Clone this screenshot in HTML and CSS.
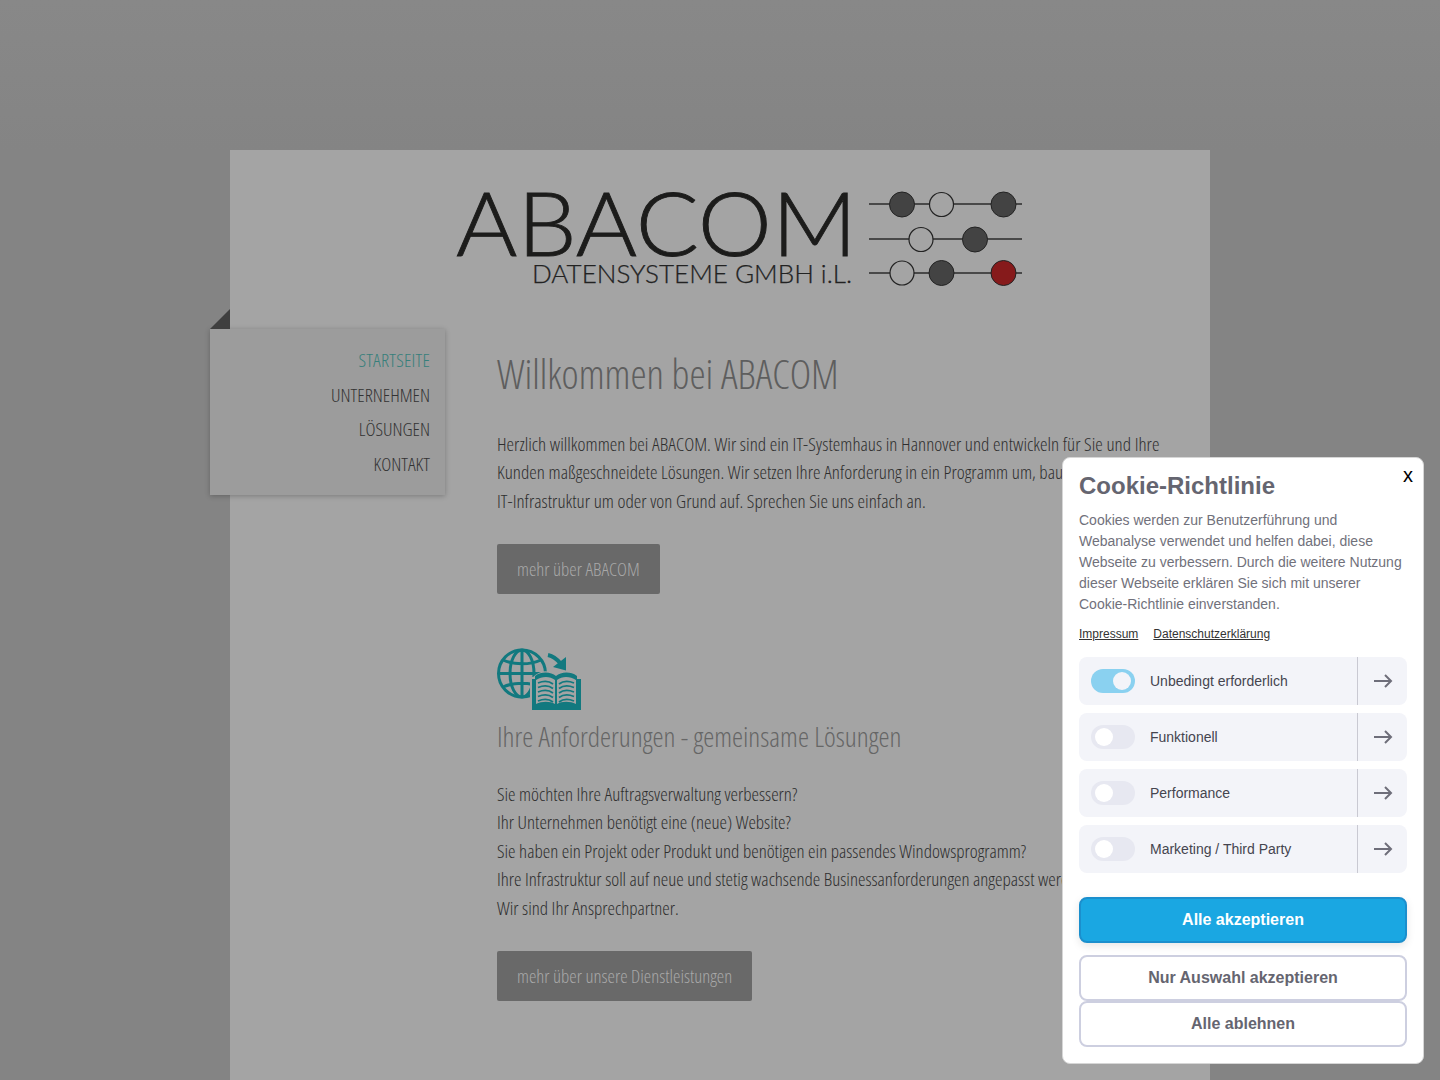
FILE: index.html
```html
<!DOCTYPE html>
<html lang="de">
<head>
<meta charset="utf-8">
<title>ABACOM</title>
<link rel="stylesheet" href="styles.css">
</head>
<body>
<div class="page">
  <header class="logo-row">
    <svg class="logo" width="566" height="100" viewBox="0 0 566 100">
      <text class="logo-big" x="-1" y="66" textLength="401" lengthAdjust="spacingAndGlyphs">ABACOM</text>
      <text class="logo-small" x="75" y="93" textLength="320" lengthAdjust="spacingAndGlyphs">DATENSYSTEME GMBH i.L.</text>
      <g class="wire">
        <line x1="412" y1="14" x2="565" y2="14"/><line x1="412" y1="49" x2="565" y2="49"/><line x1="412" y1="83" x2="565" y2="83"/>
      </g>
      <g class="bead-dark"><circle cx="445" cy="14.500" r="12.500"/><circle cx="546.500" cy="14.500" r="12.500"/><circle cx="518" cy="49.500" r="12.500"/><circle cx="484.500" cy="83" r="12.500"/></g>
      <g class="bead-light"><circle cx="484.500" cy="14.500" r="12"/><circle cx="464" cy="49.500" r="12"/><circle cx="445" cy="83" r="12"/></g>
      <circle class="bead-red" cx="546.500" cy="83" r="12.500"/>
    </svg>
  </header>
  <div class="body-row">
    <nav class="menu">
      <span class="fold"></span>
      <a class="active">STARTSEITE</a>
      <a>UNTERNEHMEN</a>
      <a>LÖSUNGEN</a>
      <a>KONTAKT</a>
    </nav>
    <main class="content">
      <h1>Willkommen bei ABACOM</h1>
      <p class="lead-one">Herzlich willkommen bei ABACOM. Wir sind ein IT-Systemhaus in Hannover und entwickeln für Sie und Ihre<br>Kunden maßgeschneidete Lösungen. Wir setzen Ihre Anforderung in ein Programm um, bauen Ihre<br>IT-Infrastruktur um oder von Grund auf. Sprechen Sie uns einfach an.</p>
      <a class="btn">mehr über ABACOM</a>
      <svg class="feature-icon" width="86" height="64" viewBox="0 0 86 64">
        <g class="globe">
          <circle cx="25" cy="25.500" r="23.500"/>
          <ellipse cx="25" cy="25.500" rx="12" ry="23.500"/>
          <path d="M6 12c11 5 27 5 38 0M6 39c11-5 27-5 38 0M2 25.500h46M25 2v47"/>
        </g>
        <path class="arrow-shaft" d="M51 7c5 1 9 4 13 9"/>
        <path class="arrow-fill" d="M69 9v13.500l-13-3.500z"/>
        <path class="book-halo" d="M33 62V29h3c8-8 17-7 24-1 7-6 16-7 25 1v33z"/>
        <path class="book-fill" d="M35 62V31h3v-3c7-5 16-4 21 0 5-4 14-5 21 0v3h4v31z"/>
        <path class="book-pages" d="M39 56V32c6-4 14-4 19 0v24c-5-3-13-3-19 0zM60 32c5-4 13-4 19 0v24c-6-3-14-3-19 0z"/>
        <path class="book-lines" d="M41 35c5-2 11-2 15 1M41 39.500c5-2 11-2 15 1M41 44c5-2 11-2 15 1M41 48.500c5-2 11-2 15 1M41 53c5-2 11-2 15 1M77 35c-5-2-11-2-15 1M77 39.500c-5-2-11-2-15 1M77 44c-5-2-11-2-15 1M77 48.500c-5-2-11-2-15 1M77 53c-5-2-11-2-15 1"/>
      </svg>
      <h2>Ihre Anforderungen - gemeinsame Lösungen</h2>
      <p class="lead-two">Sie möchten Ihre Auftragsverwaltung verbessern?<br>Ihr Unternehmen benötigt eine (neue) Website?<br>Sie haben ein Projekt oder Produkt und benötigen ein passendes Windowsprogramm?<br>Ihre Infrastruktur soll auf neue und stetig wachsende Businessanforderungen angepasst werden?<br>Wir sind Ihr Ansprechpartner.</p>
      <a class="btn btn-last">mehr über unsere Dienstleistungen</a>
    </main>
  </div>
</div>

<aside class="cookie">
  <button class="close">x</button>
  <h3>Cookie-Richtlinie</h3>
  <p>Cookies werden zur Benutzerführung und Webanalyse verwendet und helfen dabei, diese Webseite zu verbessern. Durch die weitere Nutzung dieser Webseite erklären Sie sich mit unserer Cookie-Richtlinie einverstanden.</p>
  <div class="links"><a>Impressum</a><a>Datenschutzerklärung</a></div>
  <div class="opts">
    <div class="opt"><span class="toggle on"></span><span class="label">Unbedingt erforderlich</span><span class="more"><svg width="20" height="14" viewBox="0 0 20 14"><path d="M1 7h17M12 1l6 6-6 6"/></svg></span></div>
    <div class="opt"><span class="toggle"></span><span class="label">Funktionell</span><span class="more"><svg width="20" height="14" viewBox="0 0 20 14"><path d="M1 7h17M12 1l6 6-6 6"/></svg></span></div>
    <div class="opt"><span class="toggle"></span><span class="label">Performance</span><span class="more"><svg width="20" height="14" viewBox="0 0 20 14"><path d="M1 7h17M12 1l6 6-6 6"/></svg></span></div>
    <div class="opt"><span class="toggle"></span><span class="label">Marketing / Third Party</span><span class="more"><svg width="20" height="14" viewBox="0 0 20 14"><path d="M1 7h17M12 1l6 6-6 6"/></svg></span></div>
  </div>
  <button class="cbtn primary">Alle akzeptieren</button>
  <button class="cbtn second">Nur Auswahl akzeptieren</button>
  <button class="cbtn third">Alle ablehnen</button>
</aside>
</body>
</html>
```
FILE: styles.css
```css
* { box-sizing: border-box; }
html, body { margin: 0; height: 1080px; overflow: hidden; }
body {
  background: linear-gradient(#888888 0, #848484 150px, #848484 100%);
  font-family: "Open Sans", "Liberation Sans", sans-serif;
}
.page {
  width: 980px;
  height: 930px;
  margin: 150px auto 0;
  background: #a4a4a4;
  overflow: visible;
}
.logo-row { height: 179px; padding: 40px 0 0 227px; }
.logo { display: block; overflow: visible; }
.logo-big { font: 300 89px "Lato", sans-serif; fill: #1c1c1b; stroke: #1c1c1b; stroke-width: .9px; }
.logo-small { font: 300 25px "Lato", sans-serif; fill: #222; stroke: #222; stroke-width: .25px; }
.wire line { stroke: #2b2b2b; stroke-width: 1.600; }
.bead-dark circle { fill: #434343; stroke: #222; stroke-width: 1; }
.bead-light circle { fill: #a4a4a4; stroke: #222; stroke-width: 1.200; }
.bead-red { fill: #861a1b; stroke: #222; stroke-width: 1; }
.body-row { display: flex; margin-left: -20px; }
.menu {
  position: relative;
  width: 235px;
  height: 166px;
  background: #9c9c9c;
  box-shadow: 0 1px 5px rgba(0,0,0,.25);
  padding: 14px 15px 0 0;
  display: flex;
  flex-direction: column;
  align-items: flex-end;
  flex: none;
  font-stretch: condensed;
}
.fold {
  position: absolute;
  left: 0;
  top: -20px;
  width: 0;
  height: 0;
  border-left: 20px solid transparent;
  border-bottom: 20px solid #3f3f3f;
}
.menu a {
  font-size: 19px;
  font-weight: 300;
  line-height: 34.500px;
  color: #333;
}
.menu a.active { color: #367f7b; letter-spacing: .2px; }
.content { margin-left: 52px; width: 680px; flex: none; font-stretch: condensed; font-weight: 300; }
h1 { margin: 17px 0 0; font-size: 40.800px; font-weight: 300; line-height: 54px; color: #5e5e5e; white-space: nowrap; }
h2 { margin: 4px 0 0; font-size: 28px; font-weight: 300; line-height: 40px; color: #666; white-space: nowrap; }
.content p { margin: 30px 0 0; font-size: 19px; line-height: 28.500px; color: #2e2e2e; white-space: nowrap; }
.content p.lead-one { margin-top: 29.700px; letter-spacing: .03px; }
.content p.lead-two { margin-top: 24px; font-size: 18.900px; }
.btn {
  display: inline-block;
  margin-top: 28.800px;
  height: 50px;
  padding: 0 20px;
  line-height: 50px;
  font-size: 18.800px;
  border-radius: 2px;
  background: #696969;
  color: #a8a8a8;
}
.btn-last { margin-top: 28.500px; }
.feature-icon { display: block; margin-top: 54px; }
.globe { fill: none; stroke: #12797f; stroke-width: 3; }
.arrow-shaft { fill: none; stroke: #12797f; stroke-width: 4; }
.arrow-fill { fill: #12797f; }
.book-halo { fill: #a4a4a4; }
.book-fill { fill: #12797f; }
.book-pages { fill: #a4a4a4; }
.book-lines { fill: none; stroke: #12797f; stroke-width: 1.800; }

.cookie {
  position: fixed;
  left: 1062px;
  top: 457px;
  width: 362px;
  height: 607px;
  background: #fff;
  border: 1px solid #d6d6d6;
  border-radius: 8px;
  padding: 10px 16px 0;
  font-family: "Liberation Sans", Arial, sans-serif;
  color: #656570;
}
.close {
  position: absolute;
  right: 10px;
  top: 6px;
  padding: 0;
  border: 0;
  background: none;
  font: 20px "Liberation Sans", sans-serif;
  color: #000;
}
.cookie h3 { margin: 0; font-size: 24px; font-weight: 700; line-height: 36px; color: #656570; }
.cookie p { margin: 6px 0 0; font-size: 14px; line-height: 21px; color: #71717b; }
.links { margin-top: 10px; display: flex; gap: 15px; font-size: 12px; line-height: 18px; }
.links a { color: #333; text-decoration: underline; }
.opts { margin-top: 14px; display: flex; flex-direction: column; gap: 8px; }
.opt { display: flex; align-items: center; height: 48px; background: #f3f4f9; border-radius: 8px; padding-left: 12px; }
.toggle { position: relative; width: 44px; height: 24px; border-radius: 12px; background: #e7e8f1; flex: none; }
.toggle::after { content: ""; position: absolute; left: 4px; top: 3px; width: 18px; height: 18px; border-radius: 50%; background: #fff; }
.toggle.on { background: #8ad1f0; }
.toggle.on::after { left: 22px; background: #f3f4f9; }
.label { margin-left: 15px; font-size: 14px; color: #45454f; flex: 1; }
.more { width: 50px; height: 48px; border-left: 1px solid #c9c9d2; display: flex; align-items: center; justify-content: center; }
.more svg { fill: none; stroke: #6e6e7a; stroke-width: 2; }
.cbtn { display: block; width: 100%; height: 46px; border-radius: 8px; font: 700 16px "Liberation Sans", sans-serif; padding: 0; }
.primary { margin-top: 24px; background: #1aa7e2; border: 2px solid #1b8fcd; color: #fff; box-shadow: 0 3px 8px rgba(0,0,0,.1); }
.second { margin-top: 12px; background: #fff; border: 2px solid #cdcfe0; color: #656570; }
.third { background: #fff; border: 2px solid #cdcfe0; color: #656570; }
```
